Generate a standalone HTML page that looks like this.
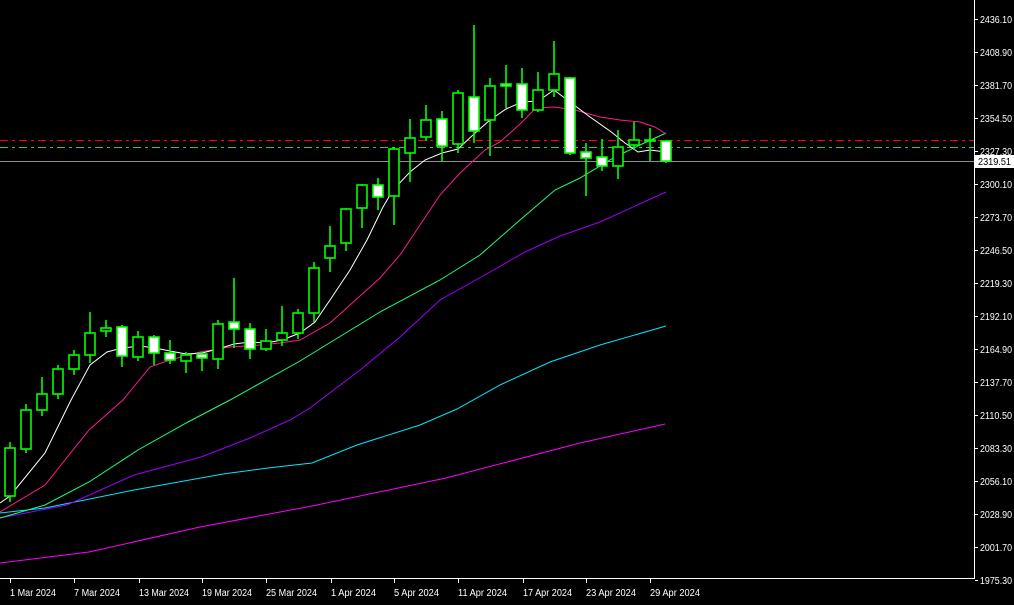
<!DOCTYPE html>
<html><head><meta charset="utf-8"><style>
html,body{margin:0;padding:0;background:#000;width:1014px;height:605px;overflow:hidden}
svg{display:block}
text{font-family:"Liberation Sans",sans-serif;font-size:10px;fill:#fff}
</style></head><body>
<svg width="1014" height="605" viewBox="0 0 1014 605" xmlns="http://www.w3.org/2000/svg">
<rect width="1014" height="605" fill="#000"/>
<line x1="0" y1="161.5" x2="974" y2="161.5" stroke="#8a8e94" stroke-width="1"/>
<line x1="0" y1="140.5" x2="974" y2="140.5" stroke="#ff0000" stroke-width="1" stroke-dasharray="8,4,3,4"/>
<line x1="0" y1="147.5" x2="974" y2="147.5" stroke="#3cc83c" stroke-width="1" stroke-dasharray="8,4,3,4"/>
<g fill="none" stroke-width="1">
<polyline stroke="#ff00ff" points="0,563 89,552 200,527 312,506 446,478 580,443 665,424"/>
<polyline stroke="#00e5ff" points="0,513 45,508 134,490 223,474 268,468 312,463 357,445 420,425 457,409 500,385 550,362 600,345 666,326"/>
<polyline stroke="#9b00ff" points="0,518 67,505 134,475 201,457 250,438 290,420 310,408 360,370 400,337 440,300 490,272 525,252 560,236 600,222 666,192"/>
<polyline stroke="#18ff80" points="0,518 45,505 89,482 138,450 188,422 230,400 300,361 380,312 440,280 480,255 520,220 555,190 580,178 615,157 640,145 666,133"/>
<polyline stroke="#ff1a8c" points="0,512 45,485 89,430 123,400 150,367 170,360 200,352 230,347 260,345 280,343 300,340 330,323 380,278 400,255 420,225 440,195 460,173 485,150 500,142 520,124 536,108 554,107 575,110 600,117 620,120 640,122 655,127 666,134"/>
<polyline stroke="#ffffff" points="0,503 10,496 45,453 71,400 90,365 107,352 122,348 140,346 155,348 170,351 186,354 202,353 218,349 234,344 250,342 266,343 282,340 300,333 315,322 330,300 350,270 367,240 383,207 393,190 410,172 425,160 442,153 458,149 474,134 490,120 506,109 522,102 538,101 554,90 570,102 590,117 610,131 625,143 638,152 650,150 666,152"/>
</g>
<g id="c" stroke="#00ff00" stroke-width="1.6"></g>
<line x1="974.5" y1="0" x2="974.5" y2="579" stroke="#fff"/>
<line x1="0" y1="578.5" x2="975" y2="578.5" stroke="#fff"/>
<g id="yl"></g>
<g id="xl"></g>
<rect x="975" y="155" width="39" height="13" fill="#fff"/>
<text x="978" y="165" textLength="33" lengthAdjust="spacingAndGlyphs" style="fill:#000">2319.51</text>
</svg>
<script>
var C=[[496,448,442,502,0],[449,410,404,453,0],[410,394,377,416,0],[394,369,365,399,0],[369,355,350,375,0],[355,333,312,363,0],[331,328,320,337,0],[327,356,325,367,1],[357,337,331,361,0],[337,353,335,365,1],[353,360,340,364,1],[361,355,352,373,0],[354,358,352,371,1],[359,324,320,369,0],[322,329,278,348,1],[329,349,323,359,1],[349,341,329,351,0],[340,333,306,346,0],[333,313,309,339,0],[313,268,262,322,0],[258,246,226,272,0],[243,209,208,251,0],[208,185,184,228,0],[185,197,178,210,1],[196,149,147,225,0],[153,138,119,182,0],[137,120,105,141,0],[119,146,111,162,1],[144,93,90,153,0],[97,131,25,143,1],[120,86,78,156,0],[84,86,65,108,1],[84,110,68,118,1],[110,90,72,112,0],[90,74,41,97,0],[78,153,77,155,1],[152,158,143,196,1],[157,166,139,171,1],[166,147,130,179,0],[145,140,122,150,0],[140,140,128,161,0],[141,161,140,163,1]];
var g=document.getElementById('c'),h='';
C.forEach(function(c,i){var x=10+16*i,t=Math.min(c[0],c[1]),b=Math.max(c[0],c[1]);
h+='<line x1="'+x+'" y1="'+c[2]+'" x2="'+x+'" y2="'+t+'"/><line x1="'+x+'" y1="'+b+'" x2="'+x+'" y2="'+c[3]+'"/>';
h+='<rect x="'+(x-5)+'" y="'+t+'" width="10" height="'+Math.max(b-t,1)+'" fill="'+(c[4]?'#fff':'#000')+'"/>';});
g.innerHTML=h;
var P=["2436.10","2408.90","2381.70","2354.50","2327.30","2300.10","2273.70","2246.50","2219.30","2192.10","2164.90","2137.70","2110.50","2083.30","2056.10","2028.90","2001.70","1975.30"],s='';
P.forEach(function(p,i){var y=19+33*i;s+='<line x1="975" y1="'+(y+.5)+'" x2="978" y2="'+(y+.5)+'" stroke="#fff"/><text x="980" y="'+(y+4)+'" textLength="32" lengthAdjust="spacingAndGlyphs">'+p+'</text>';});
document.getElementById('yl').innerHTML=s;
var D=["1 Mar 2024","7 Mar 2024","13 Mar 2024","19 Mar 2024","25 Mar 2024","1 Apr 2024","5 Apr 2024","11 Apr 2024","17 Apr 2024","23 Apr 2024","29 Apr 2024"],X=[10,74,139,202,266,331,394,458,523,586,650],W=[46,46,50,50,51,45,45,49,49,50,50],q='';
D.forEach(function(d,i){q+='<line x1="'+(X[i]+.5)+'" y1="579" x2="'+(X[i]+.5)+'" y2="583" stroke="#fff"/><text x="'+X[i]+'" y="596" textLength="'+W[i]+'" lengthAdjust="spacingAndGlyphs">'+d+'</text>';});
document.getElementById('xl').innerHTML=q;
</script>
</body></html>
